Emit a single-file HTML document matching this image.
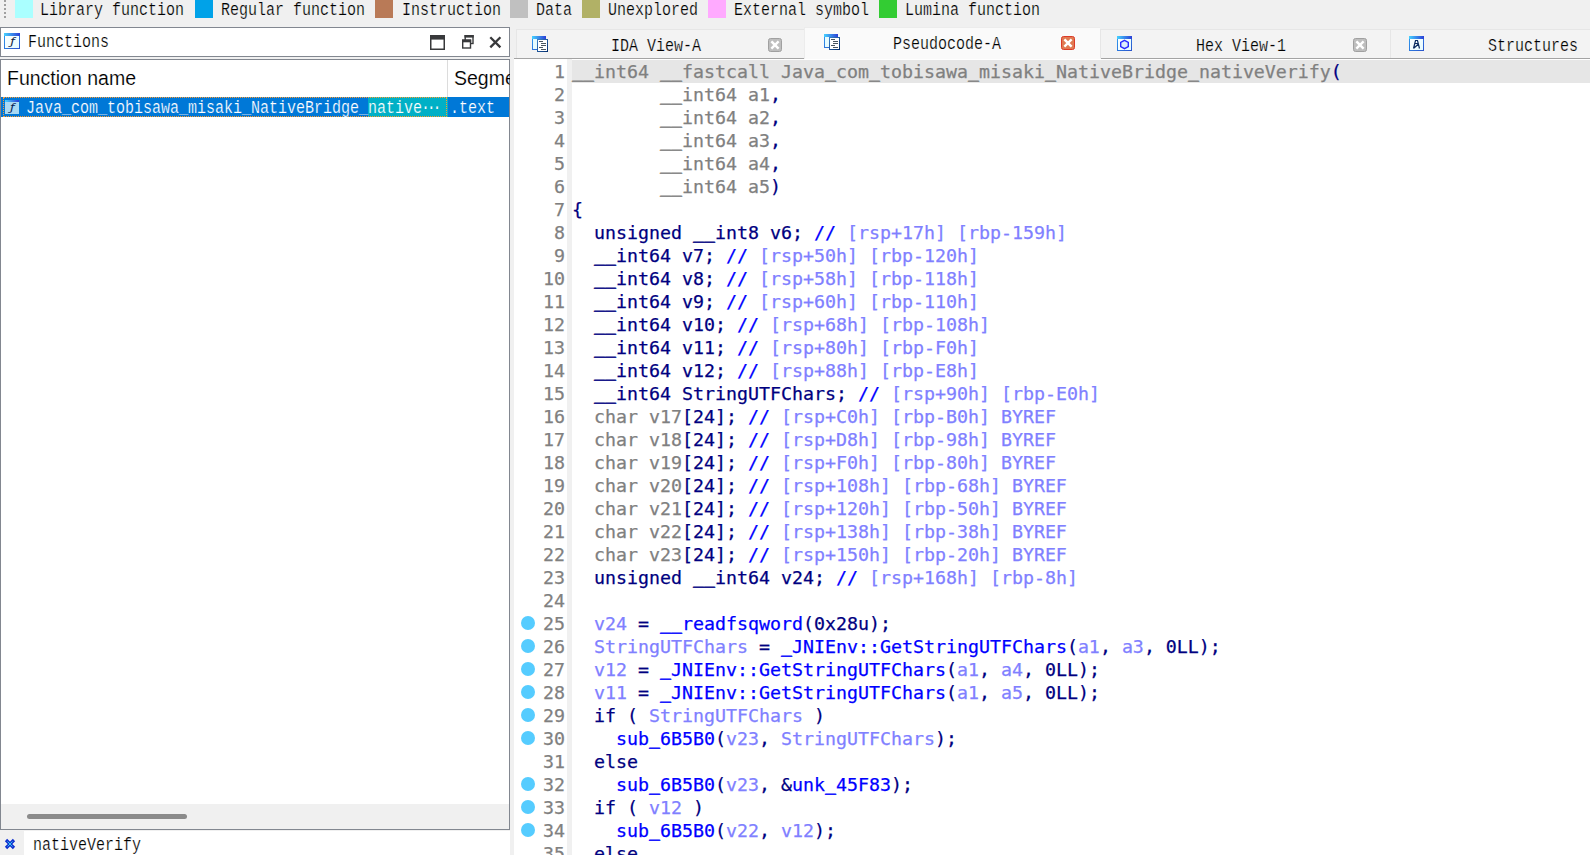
<!DOCTYPE html>
<html><head><meta charset="utf-8"><title>IDA</title>
<style>
*{box-sizing:border-box;margin:0;padding:0}
html,body{width:1590px;height:855px;overflow:hidden;background:#f0f0f0}
body{position:relative;font-family:"Liberation Mono",monospace;color:#000}
.abs{position:absolute}
svg{position:absolute;overflow:visible}
/* SimSun-like text: Liberation Mono 15px (9px advance) stretched vertically */
.ss{-webkit-text-stroke:0.18px var(--bg,#f0f0f0);position:absolute;margin-top:3px;font-family:"Liberation Mono",monospace;font-size:15px;line-height:18px;height:18px;white-space:pre;transform:scaleY(1.2);transform-origin:0 14px;color:#000}
.el{letter-spacing:-3.3px;margin-left:-1px}
/* legend */
.lgb{position:absolute;top:0;width:18px;height:18px}
#grip{left:4px;top:0;width:2px;height:18px;background:repeating-linear-gradient(to bottom,#a0a0a0 0,#a0a0a0 2px,#f0f0f0 2px,#f0f0f0 4px)}
/* functions panel */
#ftitle{left:0;top:27px;width:510px;height:30px;background:#fff;border:1px solid #828790}
#flist{left:0;top:59px;width:510px;height:771px;background:#fff;border:1px solid #828790}
#fhead{left:0;top:0;width:508px;height:37px;font-family:"Liberation Sans",sans-serif;font-size:19.5px;color:#000}
#frow{left:0;top:37px;width:508px;height:20px;background:#0078d7}
#frow .teal{position:absolute;left:367px;top:0;width:80px;height:20px;background:#00b0c6}
#frow .dot{position:absolute;left:2px;top:0;width:444px;height:20px;border:1px dotted #ff9a2e}
#fsb{left:0;top:744px;width:508px;height:25px;background:#f0f0f0}
#fsb i{position:absolute;left:26px;top:10px;width:160px;height:5px;border-radius:3px;background:#8b8b8b}
#search{left:24px;top:831px;width:486px;height:24px;background:#fff}
/* tabs */
.tab{position:absolute;top:29px;height:29px;background:#f3f3f3;border-top:1px solid #e6e6e6;border-left:1px solid #e6e6e6}
.tab.act{top:27px;height:33px;background:#fafafa;border-color:#ececec}
.tabline{position:absolute;top:58px;height:1px;background:#a3a3a3}
/* code */
#code{left:514px;top:59px;width:1076px;height:796px;background:#fff;overflow:hidden}
#gut{left:53px;top:0;width:5px;height:796px;background:#f0f0f0}
.ln{position:absolute;left:0;height:23px;width:1076px;line-height:23px;font-family:"DejaVu Sans Mono","Liberation Mono",monospace;font-size:18.27px;white-space:pre;-webkit-text-stroke:0.25px}
.hl::before{content:"";position:absolute;left:58px;right:0;top:0;height:23px;background:#e6e6e6}
.ln .n{position:absolute;left:0;width:51px;text-align:right;color:#808080}
.ln .c{position:absolute;left:58px;top:0;height:23px}
.ln .d{position:absolute;left:7px;top:4px;width:14px;height:14px;border-radius:50%;background:#55ccff}
.g{color:#808080}.k{color:#000080}.b{color:#0000ff}.l{color:#8080ff}
.ln u{text-decoration:none;text-shadow:0 -1px 0 currentColor,0 -0.5px 0 currentColor}
#ftitle,#search{--bg:#fff}
#frow{--bg:#0078d7}
.tab{--bg:#f3f3f3}
.tab.act{--bg:#fafafa}
.ss .tl{-webkit-text-stroke:0.18px #00b0c6}
#fhead span{-webkit-text-stroke:0.15px #fff}

</style></head><body>
<svg width="0" height="0" style="left:0;top:0">
<defs>
<linearGradient id="gbar" x1="0" y1="0" x2="1" y2="0"><stop offset="0" stop-color="#46d2ff"/><stop offset="1" stop-color="#2b3fd6"/></linearGradient>
<linearGradient id="gbrd" x1="0" y1="0" x2="1" y2="1"><stop offset="0" stop-color="#2f9df0"/><stop offset="1" stop-color="#2b55cc"/></linearGradient>
<linearGradient id="gdoc" x1="0" y1="0" x2="1" y2="1"><stop offset="0" stop-color="#3a7ec8"/><stop offset="1" stop-color="#06306e"/></linearGradient>
<linearGradient id="gin" x1="0" y1="0" x2="1" y2="1"><stop offset="0" stop-color="#ffffff"/><stop offset="1" stop-color="#e4fbff"/></linearGradient>
<g id="icWin"><rect x="0.5" y="0.5" width="14" height="14" fill="url(#gin)" stroke="url(#gbrd)"/><rect x="0" y="0" width="15" height="3" fill="url(#gbar)"/></g>
<g id="icDoc"><rect x="0.5" y="0.5" width="13" height="13" fill="#e6fcff" stroke="url(#gbrd)"/><rect x="0" y="0" width="14" height="3" fill="url(#gbar)"/><rect x="5.5" y="3.5" width="10" height="12" fill="#fff" stroke="url(#gdoc)"/><path d="M7 5.5h4M9 7.5h5M9 9.5h5M7 11.5h4M9 13.5h5" stroke="#4a5560" stroke-width="1" fill="none"/></g>
<g id="icX"><rect x="0.5" y="0.5" width="13" height="13" rx="2" ry="2"/><path d="M4.2 4.2L9.8 9.8M9.8 4.2L4.2 9.8" stroke="#fff" stroke-width="2.4" stroke-linecap="square" fill="none"/></g>
</defs>
</svg>
<!-- legend -->
<div id="grip" class="abs"></div>
<div class="lgb" style="left:15px;background:#aaffff"></div><div class="ss" style="left:40px;top:0">Library function</div>
<div class="lgb" style="left:195px;background:#00a2e8"></div><div class="ss" style="left:221px;top:0">Regular function</div>
<div class="lgb" style="left:375px;background:#b97a57"></div><div class="ss" style="left:402px;top:0">Instruction</div>
<div class="lgb" style="left:510px;background:#c0c0c0"></div><div class="ss" style="left:536px;top:0">Data</div>
<div class="lgb" style="left:582px;background:#b1b166"></div><div class="ss" style="left:608px;top:0">Unexplored</div>
<div class="lgb" style="left:708px;background:#ffaaff"></div><div class="ss" style="left:734px;top:0">External symbol</div>
<div class="lgb" style="left:879px;background:#33cc33"></div><div class="ss" style="left:905px;top:0">Lumina function</div>
<!-- functions title -->
<div id="ftitle" class="abs">
  <svg width="16" height="16" style="left:3px;top:5px" viewBox="0 0 16 16"><rect x="0.5" y="0.5" width="15" height="15" fill="url(#gin)" stroke="url(#gbrd)"/><rect x="0" y="0" width="16" height="3" fill="url(#gbar)"/><text transform="translate(6.2,11.7) scale(1.3,1)" font-family="DejaVu Sans,Liberation Sans,sans-serif" font-style="italic" font-size="10" fill="#101a40">ƒ</text></svg>
  <div class="ss" style="left:27px;top:4px">Functions</div>
  <svg width="15" height="15" style="left:429px;top:7px" viewBox="0 0 15 15"><rect x="0.75" y="0.75" width="13.5" height="13.5" fill="#fff" stroke="#38393b" stroke-width="1.5"/><rect x="0" y="0" width="15" height="4.6" fill="#38393b"/></svg>
  <svg width="13" height="14" style="left:461px;top:7px" viewBox="0 0 13 14"><rect x="3.2" y="0.7" width="7.8" height="7.8" fill="#fff" stroke="#38393b" stroke-width="1.4"/><rect x="2.5" y="0" width="9.2" height="2.6" fill="#38393b"/><rect x="0.7" y="5.2" width="7.8" height="7.8" fill="#fff" stroke="#38393b" stroke-width="1.4"/><rect x="0" y="4.5" width="9.2" height="2.8" fill="#38393b"/></svg>
  <svg width="12" height="12" style="left:488px;top:8px" viewBox="0 0 12 12"><path d="M1.3 1.3L11.4 11.4M11.4 1.3L1.3 11.4" stroke="#38393b" stroke-width="2.3" fill="none"/></svg>
</div>
<div id="flist" class="abs">
  <div id="fhead" class="abs"><span class="abs" style="left:6px;top:6px;line-height:24px;white-space:nowrap">Function name</span><span class="abs" style="left:453px;top:6px;line-height:24px;width:56px;overflow:hidden;white-space:nowrap">Segment</span><i class="abs" style="left:446px;top:0;width:1px;height:37px;background:#dcdcdc"></i></div>
  <div id="frow" class="abs">
    <i class="teal"></i><i class="dot"></i>
    <svg width="14" height="14" style="left:4px;top:3px" viewBox="0 0 14 14"><rect x="0" y="0" width="14" height="14" fill="#a9d9f3"/><rect x="0" y="0" width="14" height="2" fill="url(#gbar)"/><text transform="translate(5,10.6) scale(1.3,1)" font-family="DejaVu Sans,Liberation Sans,sans-serif" font-style="italic" font-size="10" fill="#0a1f55">ƒ</text></svg>
    <div class="ss" style="left:25px;top:1px;color:#fff">Java_com_tobisawa_misaki_NativeBridge_<span class="tl">native<span class="el">···</span></span></div>
    <div class="ss" style="left:449px;top:1px;color:#fff">.text</div>
  </div>
  <div id="fsb" class="abs"><i></i></div>
</div>
<svg width="12" height="12" style="left:4px;top:838px" viewBox="0 0 12 12"><path d="M2 2L10 10M10 2L2 10" stroke="#1030d0" stroke-width="3.2" fill="none"/><path d="M3.5 3.5L8.5 8.5M8.5 3.5L3.5 8.5" stroke="#38c8f0" stroke-width="1" fill="none"/></svg>
<div id="search" class="abs"><div class="ss" style="left:9px;top:4px">nativeVerify</div></div>
<!-- tabs -->
<div class="tab" style="left:516px;width:288px"><svg width="16" height="16" style="left:15px;top:6px"><use href="#icDoc"/></svg><div class="ss" style="left:94px;top:6px">IDA View-A</div><svg width="14" height="14" style="left:251px;top:8px" fill="#bebebe" stroke="#a0a0a0"><use href="#icX"/></svg></div>
<div class="tab act" style="left:804px;width:296px"><svg width="16" height="16" style="left:19px;top:6px"><use href="#icDoc"/></svg><div class="ss" style="left:88px;top:6px">Pseudocode-A</div><svg width="14" height="14" style="left:256px;top:8px" fill="#e07a52" stroke="#dc3a28"><use href="#icX"/></svg></div>
<div class="tab" style="left:1100px;width:290px"><svg width="15" height="15" style="left:16px;top:6px"><use href="#icWin"/><path d="M7.5 4.3L11.3 6.4V10.6L7.5 12.7L3.7 10.6V6.4Z" fill="#dcecfb" stroke="#2828ff" stroke-width="1.4"/></svg><div class="ss" style="left:95px;top:6px">Hex View-1</div><svg width="14" height="14" style="left:252px;top:8px" fill="#bebebe" stroke="#a0a0a0"><use href="#icX"/></svg></div>
<div class="tab" style="left:1390px;width:200px"><svg width="15" height="15" style="left:18px;top:6px"><use href="#icWin"/><path d="M4.5 12.5L6.5 4.5H8.5L10.5 12.5M6 7.5H9M5 12L9.5 8" fill="none" stroke="#0a2a60" stroke-width="1.2"/></svg><div class="ss" style="left:97px;top:6px">Structures</div></div>
<div class="tabline" style="left:514px;width:290px"></div>
<div class="tabline" style="left:1101px;width:489px"></div>
<!-- code -->
<div id="code" class="abs">
<div id="gut" class="abs"></div>
<div class="ln hl" style="top:1px"><span class="n">1</span><span class="c"><span class="g"><u>__</u>int64 <u>__</u>fastcall Java<u>_</u>com<u>_</u>tobisawa<u>_</u>misaki<u>_</u>NativeBridge<u>_</u>nativeVerify</span><span class="k">(</span></span></div>
<div class="ln" style="top:24px"><span class="n">2</span><span class="c"><span class="g">        <u>__</u>int64 a1</span><span class="k">,</span></span></div>
<div class="ln" style="top:47px"><span class="n">3</span><span class="c"><span class="g">        <u>__</u>int64 a2</span><span class="k">,</span></span></div>
<div class="ln" style="top:70px"><span class="n">4</span><span class="c"><span class="g">        <u>__</u>int64 a3</span><span class="k">,</span></span></div>
<div class="ln" style="top:93px"><span class="n">5</span><span class="c"><span class="g">        <u>__</u>int64 a4</span><span class="k">,</span></span></div>
<div class="ln" style="top:116px"><span class="n">6</span><span class="c"><span class="g">        <u>__</u>int64 a5</span><span class="k">)</span></span></div>
<div class="ln" style="top:139px"><span class="n">7</span><span class="c"><span class="k">{</span></span></div>
<div class="ln" style="top:162px"><span class="n">8</span><span class="c"><span class="k">  unsigned <u>__</u>int8 v6; </span><span class="b">// </span><span class="l">[rsp+17h] [rbp-159h]</span></span></div>
<div class="ln" style="top:185px"><span class="n">9</span><span class="c"><span class="k">  <u>__</u>int64 v7; </span><span class="b">// </span><span class="l">[rsp+50h] [rbp-120h]</span></span></div>
<div class="ln" style="top:208px"><span class="n">10</span><span class="c"><span class="k">  <u>__</u>int64 v8; </span><span class="b">// </span><span class="l">[rsp+58h] [rbp-118h]</span></span></div>
<div class="ln" style="top:231px"><span class="n">11</span><span class="c"><span class="k">  <u>__</u>int64 v9; </span><span class="b">// </span><span class="l">[rsp+60h] [rbp-110h]</span></span></div>
<div class="ln" style="top:254px"><span class="n">12</span><span class="c"><span class="k">  <u>__</u>int64 v10; </span><span class="b">// </span><span class="l">[rsp+68h] [rbp-108h]</span></span></div>
<div class="ln" style="top:277px"><span class="n">13</span><span class="c"><span class="k">  <u>__</u>int64 v11; </span><span class="b">// </span><span class="l">[rsp+80h] [rbp-F0h]</span></span></div>
<div class="ln" style="top:300px"><span class="n">14</span><span class="c"><span class="k">  <u>__</u>int64 v12; </span><span class="b">// </span><span class="l">[rsp+88h] [rbp-E8h]</span></span></div>
<div class="ln" style="top:323px"><span class="n">15</span><span class="c"><span class="k">  <u>__</u>int64 StringUTFChars; </span><span class="b">// </span><span class="l">[rsp+90h] [rbp-E0h]</span></span></div>
<div class="ln" style="top:346px"><span class="n">16</span><span class="c"><span class="g">  char v17</span><span class="k">[24]; </span><span class="b">// </span><span class="l">[rsp+C0h] [rbp-B0h] BYREF</span></span></div>
<div class="ln" style="top:369px"><span class="n">17</span><span class="c"><span class="g">  char v18</span><span class="k">[24]; </span><span class="b">// </span><span class="l">[rsp+D8h] [rbp-98h] BYREF</span></span></div>
<div class="ln" style="top:392px"><span class="n">18</span><span class="c"><span class="g">  char v19</span><span class="k">[24]; </span><span class="b">// </span><span class="l">[rsp+F0h] [rbp-80h] BYREF</span></span></div>
<div class="ln" style="top:415px"><span class="n">19</span><span class="c"><span class="g">  char v20</span><span class="k">[24]; </span><span class="b">// </span><span class="l">[rsp+108h] [rbp-68h] BYREF</span></span></div>
<div class="ln" style="top:438px"><span class="n">20</span><span class="c"><span class="g">  char v21</span><span class="k">[24]; </span><span class="b">// </span><span class="l">[rsp+120h] [rbp-50h] BYREF</span></span></div>
<div class="ln" style="top:461px"><span class="n">21</span><span class="c"><span class="g">  char v22</span><span class="k">[24]; </span><span class="b">// </span><span class="l">[rsp+138h] [rbp-38h] BYREF</span></span></div>
<div class="ln" style="top:484px"><span class="n">22</span><span class="c"><span class="g">  char v23</span><span class="k">[24]; </span><span class="b">// </span><span class="l">[rsp+150h] [rbp-20h] BYREF</span></span></div>
<div class="ln" style="top:507px"><span class="n">23</span><span class="c"><span class="k">  unsigned <u>__</u>int64 v24; </span><span class="b">// </span><span class="l">[rsp+168h] [rbp-8h]</span></span></div>
<div class="ln" style="top:530px"><span class="n">24</span><span class="c"></span></div>
<div class="ln" style="top:553px"><i class="d"></i><span class="n">25</span><span class="c"><span class="l">  v24</span><span class="k"> = </span><span class="b"><u>__</u>readfsqword</span><span class="k">(0x28u);</span></span></div>
<div class="ln" style="top:576px"><i class="d"></i><span class="n">26</span><span class="c"><span class="l">  StringUTFChars</span><span class="k"> = </span><span class="b"><u>_</u>JNIEnv::GetStringUTFChars</span><span class="k">(</span><span class="l">a1</span><span class="k">, </span><span class="l">a3</span><span class="k">, 0LL);</span></span></div>
<div class="ln" style="top:599px"><i class="d"></i><span class="n">27</span><span class="c"><span class="l">  v12</span><span class="k"> = </span><span class="b"><u>_</u>JNIEnv::GetStringUTFChars</span><span class="k">(</span><span class="l">a1</span><span class="k">, </span><span class="l">a4</span><span class="k">, 0LL);</span></span></div>
<div class="ln" style="top:622px"><i class="d"></i><span class="n">28</span><span class="c"><span class="l">  v11</span><span class="k"> = </span><span class="b"><u>_</u>JNIEnv::GetStringUTFChars</span><span class="k">(</span><span class="l">a1</span><span class="k">, </span><span class="l">a5</span><span class="k">, 0LL);</span></span></div>
<div class="ln" style="top:645px"><i class="d"></i><span class="n">29</span><span class="c"><span class="k">  if ( </span><span class="l">StringUTFChars</span><span class="k"> )</span></span></div>
<div class="ln" style="top:668px"><i class="d"></i><span class="n">30</span><span class="c"><span class="b">    sub<u>_</u>6B5B0</span><span class="k">(</span><span class="l">v23</span><span class="k">, </span><span class="l">StringUTFChars</span><span class="k">);</span></span></div>
<div class="ln" style="top:691px"><span class="n">31</span><span class="c"><span class="k">  else</span></span></div>
<div class="ln" style="top:714px"><i class="d"></i><span class="n">32</span><span class="c"><span class="b">    sub<u>_</u>6B5B0</span><span class="k">(</span><span class="l">v23</span><span class="k">, &amp;</span><span class="b">unk<u>_</u>45F83</span><span class="k">);</span></span></div>
<div class="ln" style="top:737px"><i class="d"></i><span class="n">33</span><span class="c"><span class="k">  if ( </span><span class="l">v12</span><span class="k"> )</span></span></div>
<div class="ln" style="top:760px"><i class="d"></i><span class="n">34</span><span class="c"><span class="b">    sub<u>_</u>6B5B0</span><span class="k">(</span><span class="l">v22</span><span class="k">, </span><span class="l">v12</span><span class="k">);</span></span></div>
<div class="ln" style="top:783px"><span class="n">35</span><span class="c"><span class="k">  else</span></span></div>
</div>

</body></html>
